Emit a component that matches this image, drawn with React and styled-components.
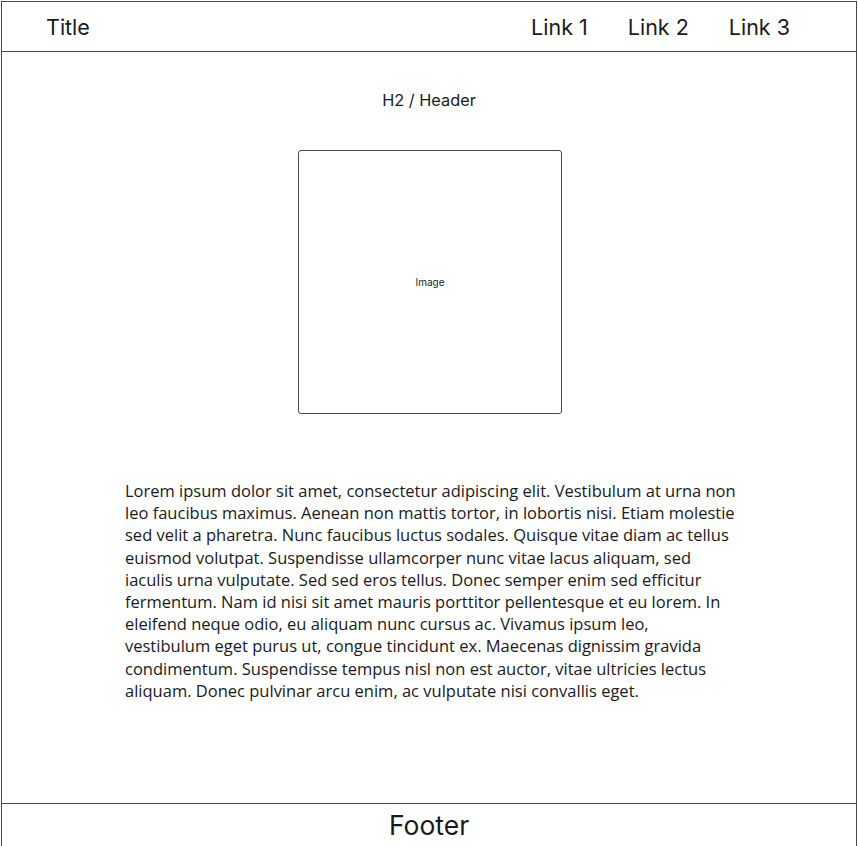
import React from "react";
import styled, { createGlobalStyle } from "styled-components";

const lineColor = "#464b51";

const GlobalStyle = createGlobalStyle`
  html, body {
    margin: 0;
    padding: 0;
    background: #fff;
  }
  body {
    font-family: Inter, "Liberation Sans", sans-serif;
    color: #1a1a1a;
  }
`;

const Page = styled.div`
  display: flex;
  flex-direction: column;
  box-sizing: border-box;
  border: 1px solid ${lineColor};
  border-bottom: none;
  margin: 1px 0 0 1px;
  height: 845px;
  width: 856px;
`;

const Header = styled.header`
  display: flex;
  align-items: center;
  justify-content: space-between;
  height: 49px;
  flex-shrink: 0;
  padding: 0 66px 0 44px;
  border-bottom: 1px solid ${lineColor};
`;

const Title = styled.span`
  font-size: 21.5px;
`;

const Nav = styled.nav`
  display: flex;
  gap: 40px;
`;

const NavLink = styled.a`
  color: #1a1a1a;
  text-decoration: none;
  font-size: 21.5px;
`;

const Main = styled.main`
  flex: 1;
  display: flex;
  flex-direction: column;
  align-items: center;
`;

const Heading = styled.h2`
  margin: 38px 0 0;
  font-size: 16.3px;
  font-weight: 400;
  line-height: 20px;
`;

const ImageBox = styled.div`
  margin: 40px 0 0 2px;
  width: 262px;
  height: 262px;
  border: 1px solid ${lineColor};
  border-radius: 3px;
  display: flex;
  align-items: center;
  justify-content: center;
  font-size: 10px;
  color: #222;
`;

const Paragraph = styled.p`
  margin: 66px 0 0 3px;
  width: 611px;
  font-family: "Open Sans", "Noto Sans", sans-serif;
  font-size: 16.5px;
  line-height: 22.2px;
  color: #1a1a1a;
`;

const Footer = styled.footer`
  height: 42px;
  flex-shrink: 0;
  border-top: 1px solid ${lineColor};
  display: flex;
  align-items: center;
  justify-content: center;
  font-size: 26.5px;
`;

const text =
  "Lorem ipsum dolor sit amet, consectetur adipiscing elit. Vestibulum at urna non leo faucibus maximus. Aenean non mattis tortor, in lobortis nisi. Etiam molestie sed velit a pharetra. Nunc faucibus luctus sodales. Quisque vitae diam ac tellus euismod volutpat. Suspendisse ullamcorper nunc vitae lacus aliquam, sed iaculis urna vulputate. Sed sed eros tellus. Donec semper enim sed efficitur fermentum. Nam id nisi sit amet mauris porttitor pellentesque et eu lorem. In eleifend neque odio, eu aliquam nunc cursus ac. Vivamus ipsum leo, vestibulum eget purus ut, congue tincidunt ex. Maecenas dignissim gravida condimentum. Suspendisse tempus nisl non est auctor, vitae ultricies lectus aliquam. Donec pulvinar arcu enim, ac vulputate nisi convallis eget.";

export default function App() {
  return (
    <>
      <GlobalStyle />
      <Page>
        <Header>
          <Title>Title</Title>
          <Nav>
            <NavLink href="#">Link 1</NavLink>
            <NavLink href="#">Link 2</NavLink>
            <NavLink href="#">Link 3</NavLink>
          </Nav>
        </Header>
        <Main>
          <Heading>H2 / Header</Heading>
          <ImageBox>Image</ImageBox>
          <Paragraph>{text}</Paragraph>
        </Main>
        <Footer>Footer</Footer>
      </Page>
    </>
  );
}
